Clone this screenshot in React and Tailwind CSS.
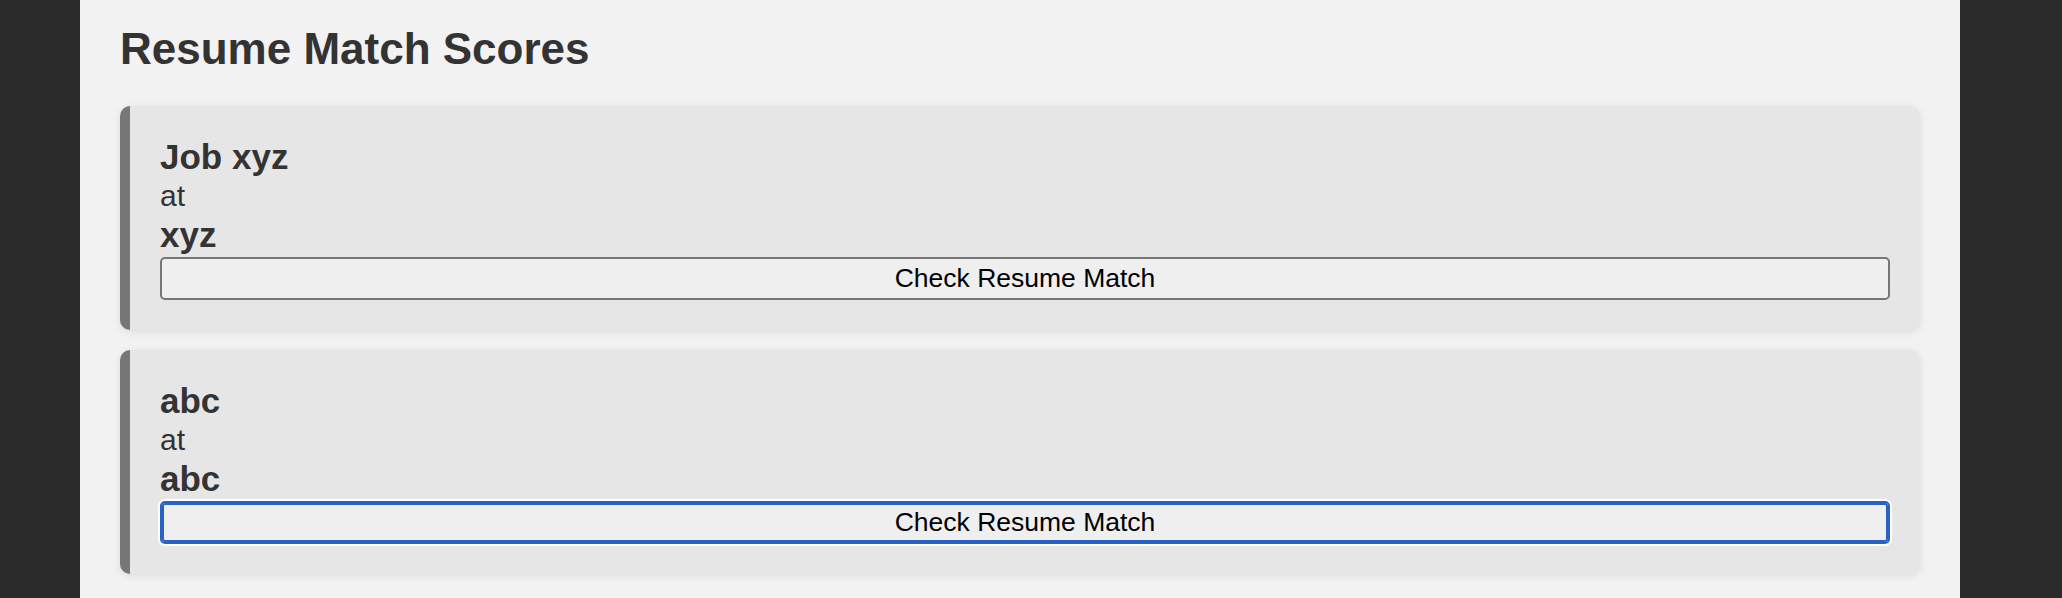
import React from "react";

const jobs = [
  { id: 1, title: "Job xyz", company: "xyz", focused: false },
  { id: 2, title: "abc", company: "abc", focused: true },
];

function JobCard({ job }) {
  return (
    <div className="rounded-[10px] border-l-[10px] border-[#777777] bg-[#e6e6e6] pt-[31px] pr-[30px] pb-[30px] pl-[30px] shadow-[0_2px_8px_rgba(0,0,0,0.09)]">
      <h3 className="text-[35px] leading-[40px] font-bold text-[#333333]">
        {job.title}
      </h3>
      <p className="text-[30px] leading-[38px] text-[#333333]">at</p>
      <p className="text-[35px] leading-[40px] font-bold text-[#333333]">
        {job.company}
      </p>
      <button
        type="button"
        className={
          job.focused
            ? "mt-[2px] flex h-[43px] w-full items-center justify-center rounded-[5px] border-2 border-[#2862c7] bg-[#efefef] text-[26.5px] text-black shadow-[inset_0_0_0_2px_#2862c7,0_0_0_2px_#ffffff]"
            : "mt-[2px] flex h-[43px] w-full items-center justify-center rounded-[5px] border-2 border-[#767676] bg-[#efefef] text-[26.5px] text-black"
        }
      >
        Check Resume Match
      </button>
    </div>
  );
}

export default function App() {
  return (
    <div
      className="flex min-h-screen bg-[#2b2b2b]"
      style={{ fontFamily: '"Liberation Sans", Arial, sans-serif' }}
    >
      <div className="ml-[80px] min-h-screen w-[1880px] bg-[#f2f2f2] px-[40px]">
        <h2 className="mt-[24px] mb-[32px] text-[44px] leading-[50px] font-bold text-[#333333]">
          Resume Match Scores
        </h2>
        <div className="flex flex-col gap-[20px]">
          {jobs.map((job) => (
            <JobCard key={job.id} job={job} />
          ))}
        </div>
      </div>
    </div>
  );
}
